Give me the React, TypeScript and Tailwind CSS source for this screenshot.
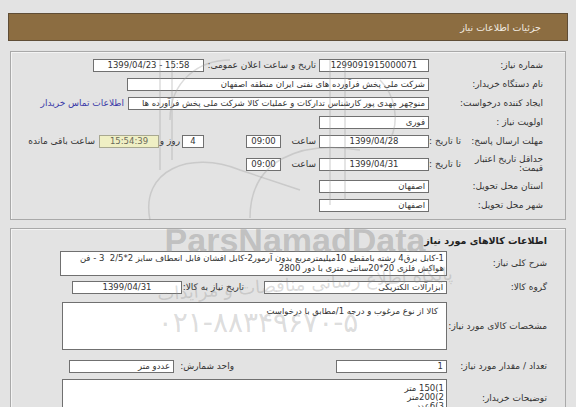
import React from "react";

const box = "h-[13px] bg-white border border-[#707070] text-[8.5px] leading-[11px] px-[3px] overflow-hidden whitespace-nowrap text-[#333]";

function Label({ w, children, className = "" }: { w: string; children: React.ReactNode; className?: string }) {
  return <div className={`${w} shrink-0 whitespace-nowrap ${className}`}>{children}</div>;
}

export default function App() {
  return (
    <div
      dir="rtl"
      className="relative w-[576px] h-[407px] overflow-hidden bg-[#e3e3e3] text-[#333] text-[9px] leading-[11px] font-['DejaVu_Sans',sans-serif]"
    >
      {/* header */}
      <div className="pt-[13px] px-[8px]">
        <div className="h-[28px] bg-[#8c6d41] border border-[#5f4d36] flex items-center pr-[26px] text-[#f2ece2] text-[9.5px]">
          جزئیات اطلاعات نیاز
        </div>
      </div>

      {/* panel 1 */}
      <div className="mx-[10px] mt-[10px] h-[169px] border border-[#a9a9a9] shadow-[inset_1px_1px_0_#f4f4f4] pt-[4px] pr-[22px]">
        <div className="h-[19px] flex items-center">
          <Label w="w-[114px]">شماره نیاز:</Label>
          <div className={`${box} w-[110px] text-center`}>1299091915000071</div>
          <Label w="w-[115px]" className="pr-[3px]">تاریخ و ساعت اعلان عمومی:</Label>
          <div dir="ltr" className={`${box} w-[111px] text-center`}>1399/04/23 - 15:58</div>
        </div>
        <div className="h-[19px] flex items-center">
          <Label w="w-[114px]">نام دستگاه خریدار:</Label>
          <div className={`${box} w-[302px]`}>شرکت ملی پخش فرآورده های نفتی ایران منطقه اصفهان</div>
        </div>
        <div className="h-[19px] flex items-center">
          <Label w="w-[114px]">ایجاد کننده درخواست:</Label>
          <div className={`${box} w-[301px] px-[1px]`}>منوچهر مهدی پور کارشناس تدارکات و عملیات کالا شرکت ملی پخش فرآورده ها</div>
          <div className="mr-[4px] whitespace-nowrap text-[#3a3aa8]">اطلاعات تماس خریدار</div>
        </div>
        <div className="h-[19px] flex items-center">
          <Label w="w-[114px]">اولویت نیاز :</Label>
          <div className={`${box} w-[110px]`}>فوری</div>
        </div>
        <div className="h-[19px] flex items-center">
          <Label w="w-[82px]">مهلت ارسال پاسخ:</Label>
          <Label w="w-[32px]">تا تاریخ :</Label>
          <div className={`${box} w-[110px] text-center`}>1399/04/28</div>
          <Label w="w-[38px]" className="pr-[3px]">ساعت</Label>
          <div className={`${box} w-[35px] text-center`}>09:00</div>
          <div className="w-[42px] shrink-0" />
          <div className={`${box} w-[22px] text-center`}>4</div>
          <Label w="w-[23px]" className="pr-[2px]">روز و</Label>
          <div className="h-[13px] w-[60px] bg-[#efefc4] border border-[#a8a890] text-[8.5px] leading-[11px] text-center text-[#6a6a5a]">15:54:39</div>
          <Label w="w-[80px]" className="pr-[4px]">ساعت باقی مانده</Label>
        </div>
        <div className="h-[26px] flex items-center">
          <Label w="w-[82px]" className="whitespace-normal leading-[9px]">
            حداقل تاریخ اعتبار
            <br />
            قیمت:
          </Label>
          <Label w="w-[32px]">تا تاریخ :</Label>
          <div className={`${box} w-[110px] text-center`}>1399/04/31</div>
          <Label w="w-[38px]" className="pr-[3px]">ساعت</Label>
          <div className={`${box} w-[35px] text-center`}>09:00</div>
        </div>
        <div className="h-[19px] flex items-center">
          <Label w="w-[114px]">استان محل تحویل:</Label>
          <div className={`${box} w-[110px]`}>اصفهان</div>
        </div>
        <div className="h-[19px] flex items-center">
          <Label w="w-[114px]">شهر محل تحویل:</Label>
          <div className={`${box} w-[110px]`}>اصفهان</div>
        </div>
      </div>

      {/* panel 2 */}
      <div className="mx-[10px] mt-[8px] h-[200px] border border-[#a9a9a9] shadow-[inset_1px_1px_0_#f4f4f4] pr-[18px]">
        <div className="h-[22px] flex items-center font-bold text-[9.5px] text-[#222]">اطلاعات کالاهای مورد نیاز</div>
        <div className="flex items-center">
          <Label w="w-[100px]">شرح کلی نیاز:</Label>
          <div className="h-[25px] w-[387px] bg-white border border-[#707070] text-[8.5px] leading-[10px] px-[2px] pt-[1px] overflow-hidden whitespace-nowrap">
            1-کابل برق4 رشته بامقطع 10میلیمترمربع بدون آرمور2-کابل افشان فابل انعطاف سایز 2*2/5&nbsp; 3 - فن
            <br />
            هواکش فلزی 20*20سانتی متری با دور 2800
          </div>
        </div>
        <div className="mt-[5px] h-[13px] flex items-center">
          <Label w="w-[100px]">گروه کالا:</Label>
          <div className={`${box} w-[183px]`}>ابزارآلات الکتریکی</div>
          <Label w="w-[82px]" className="pr-[20px]">تاریخ نیاز به کالا:</Label>
          <div className={`${box} w-[110px] text-center`}>1399/04/31</div>
        </div>
        <div className="mt-[8px] flex items-center">
          <Label w="w-[100px]">مشخصات کالای مورد نیاز:</Label>
          <div className="h-[48px] w-[385px] bg-white border border-[#707070] text-[8.5px] leading-[11px] pr-[8px] pt-[3px]">
            کالا از نوع مرغوب و درجه 1/مطابق با درخواست
          </div>
        </div>
        <div className="mt-[10px] h-[13px] flex items-center">
          <Label w="w-[100px]">تعداد / مقدار مورد نیاز:</Label>
          <div className={`${box} w-[111px]`}>1</div>
          <Label w="w-[162px]" className="pr-[102px]">واحد شمارش:</Label>
          <div className={`${box} w-[105px]`}>عددو متر</div>
        </div>
        <div className="mt-[6px] flex items-start">
          <Label w="w-[100px]" className="pt-[14px]">توضیحات خریدار:</Label>
          <div className="h-[60px] w-[385px] bg-white border border-[#707070] text-[8.5px] leading-[9px] pr-[2px] pt-[4px]">
            <div>1)150 متر</div>
            <div>2)200متر</div>
            <div>3)6عدد</div>
          </div>
        </div>
      </div>

      {/* watermark */}
      <svg className="absolute left-0 top-0 pointer-events-none" width="576" height="407" viewBox="0 0 576 407">
        <g fill="none" stroke="#9a9a9a" strokeOpacity="0.35" strokeWidth="1.5">
          <path d="M150 220 C 140 170, 190 150, 240 170 L 300 190" />
          <path d="M170 120 C 170 80, 200 60, 230 60" />
          <path d="M250 218 C 250 160, 300 140, 360 150" />
          <path d="M330 60 L 330 205" />
          <path d="M345 60 L 345 200" />
          <path d="M160 170 L 160 60" />
          <path d="M172 160 L 172 60" />
          <path d="M390 140 C 400 120, 395 95, 380 80" />
        </g>
        <text x="295" y="252" textAnchor="middle" fontFamily="Liberation Sans, sans-serif" fontWeight="bold" fontSize="34" fill="#8a8a8a" fillOpacity="0.4">ParsNamadData</text>
        <text x="305" y="290" textAnchor="middle" fontFamily="DejaVu Sans, sans-serif" fontSize="18" fill="#8a8a8a" fillOpacity="0.3" transform="rotate(-4 305 285)">پایگاه اطلاع رسانی مناقصات و مزایدات</text>
        <text x="258" y="332" textAnchor="middle" fontFamily="DejaVu Sans, sans-serif" fontSize="28" fill="#8a8a8a" fillOpacity="0.3">۰۲۱-۸۸۳۴۹۶۷۰-۵</text>
      </svg>
    </div>
  );
}
